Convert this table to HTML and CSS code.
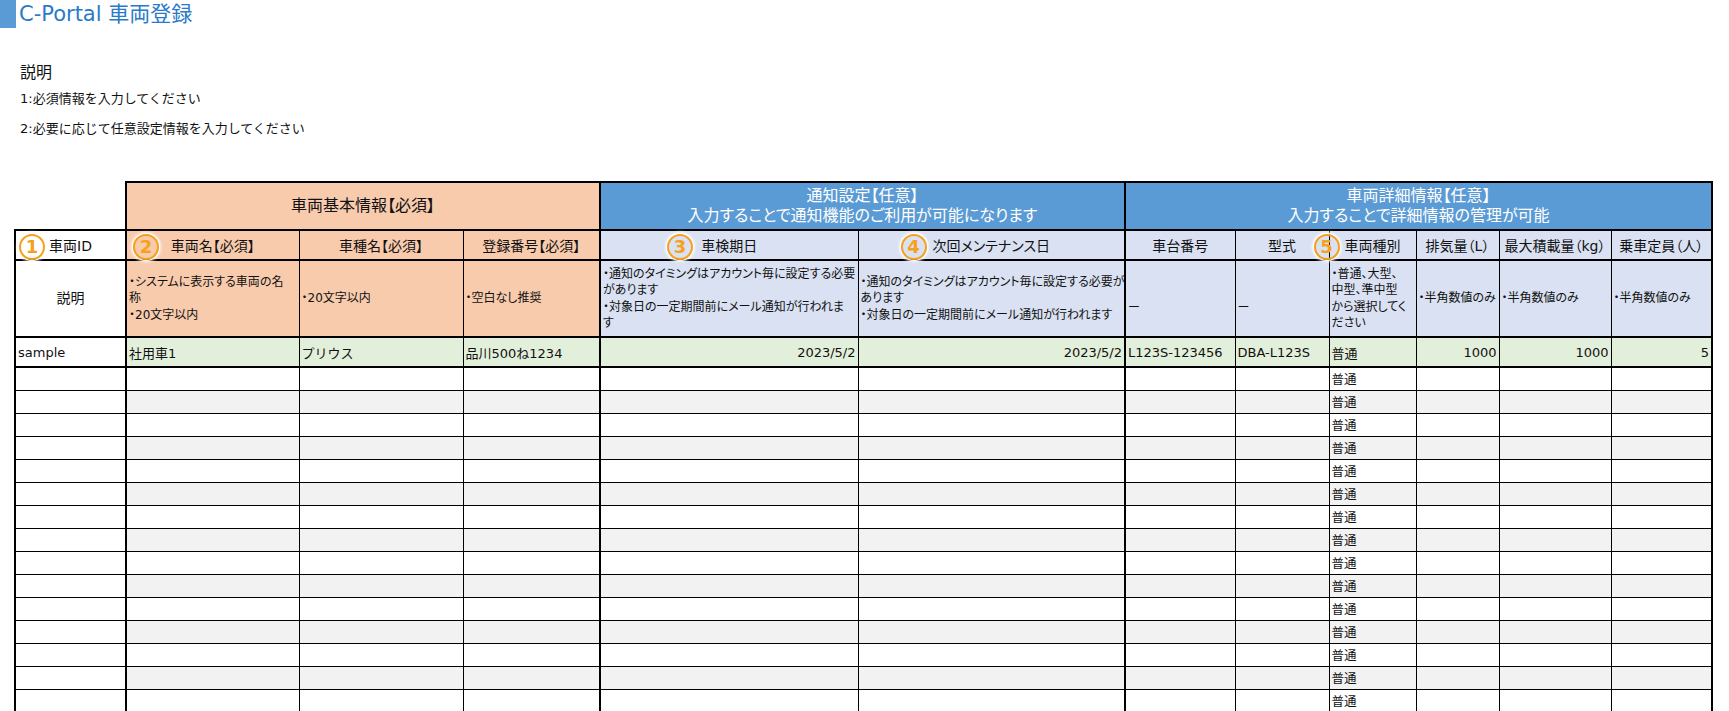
FILE: index.html
```html
<!DOCTYPE html>
<html lang="ja">
<head>
<meta charset="utf-8">
<title>C-Portal 車両登録</title>
<link rel="stylesheet" href="styles.css">
</head>
<body>
<header class="title">
  <span class="title-mark"></span>
  <h1 class="title-text">C-Portal 車両登録</h1>
</header>
<section class="intro">
  <p class="intro-head">説明</p>
  <p class="intro-line">1:必須情報を入力してください</p>
  <p class="intro-line">2:必要に応じて任意設定情報を入力してください</p>
</section>
<table class="sheet">
  <colgroup>
    <col><col><col><col><col><col><col><col><col><col><col><col>
  </colgroup>
  <tbody>
    <tr class="grp">
      <td class="blank"></td>
      <td colspan="3" class="g-req">車両基本情報【必須】</td>
      <td colspan="2" class="g-opt">通知設定【任意】<br>入力することで通知機能のご利用が可能になります</td>
      <td colspan="6" class="g-opt">車両詳細情報【任意】<br>入力することで詳細情報の管理が可能</td>
    </tr>
    <tr class="hdr">
      <td class="c1"><span class="num n1">1</span>車両ID</td>
      <td class="or"><span class="num n2">2</span>車両名【必須】</td>
      <td class="or">車種名【必須】</td>
      <td class="or ge">登録番号【必須】</td>
      <td class="lb"><span class="num n3">3</span>車検期日</td>
      <td class="lb ge"><span class="num n4">4</span>次回メンテナンス日</td>
      <td class="lb">車台番号</td>
      <td class="lb">型式</td>
      <td class="lb"><span class="num n5">5</span>車両種別</td>
      <td class="lb">排気量（L）</td>
      <td class="lb">最大積載量（kg）</td>
      <td class="lb ge">乗車定員（人）</td>
    </tr>
    <tr class="desc">
      <td class="c1 center">説明</td>
      <td class="or">・システムに表示する車両の名<br>称<br>・20文字以内</td>
      <td class="or">・20文字以内</td>
      <td class="or ge">・空白なし推奨</td>
      <td class="lb">・通知のタイミングはアカウント毎に設定する必要<br>があります<br>・対象日の一定期間前にメール通知が行われま<br>す</td>
      <td class="lb ge">・通知のタイミングはアカウント毎に設定する必要が<br>あります<br>・対象日の一定期間前にメール通知が行われます</td>
      <td class="lb dash">ー</td>
      <td class="lb dash">ー</td>
      <td class="lb">・普通、大型、<br>中型、準中型<br>から選択してく<br>ださい</td>
      <td class="lb">・半角数値のみ</td>
      <td class="lb">・半角数値のみ</td>
      <td class="lb ge">・半角数値のみ</td>
    </tr>
    <tr class="smp">
      <td class="c1">sample</td>
      <td>社用車1</td>
      <td>プリウス</td>
      <td class="ge">品川500ね1234</td>
      <td class="r">2023/5/2</td>
      <td class="r ge">2023/5/2</td>
      <td>L123S-123456</td>
      <td>DBA-L123S</td>
      <td>普通</td>
      <td class="r">1000</td>
      <td class="r">1000</td>
      <td class="r ge">5</td>
    </tr>
    <tr class="data"><td class="c1"></td><td></td><td></td><td class="ge"></td><td></td><td class="ge"></td><td></td><td></td><td class="kind">普通</td><td></td><td></td><td class="ge"></td></tr>
    <tr class="data"><td class="c1"></td><td></td><td></td><td class="ge"></td><td></td><td class="ge"></td><td></td><td></td><td class="kind">普通</td><td></td><td></td><td class="ge"></td></tr>
    <tr class="data"><td class="c1"></td><td></td><td></td><td class="ge"></td><td></td><td class="ge"></td><td></td><td></td><td class="kind">普通</td><td></td><td></td><td class="ge"></td></tr>
    <tr class="data"><td class="c1"></td><td></td><td></td><td class="ge"></td><td></td><td class="ge"></td><td></td><td></td><td class="kind">普通</td><td></td><td></td><td class="ge"></td></tr>
    <tr class="data"><td class="c1"></td><td></td><td></td><td class="ge"></td><td></td><td class="ge"></td><td></td><td></td><td class="kind">普通</td><td></td><td></td><td class="ge"></td></tr>
    <tr class="data"><td class="c1"></td><td></td><td></td><td class="ge"></td><td></td><td class="ge"></td><td></td><td></td><td class="kind">普通</td><td></td><td></td><td class="ge"></td></tr>
    <tr class="data"><td class="c1"></td><td></td><td></td><td class="ge"></td><td></td><td class="ge"></td><td></td><td></td><td class="kind">普通</td><td></td><td></td><td class="ge"></td></tr>
    <tr class="data"><td class="c1"></td><td></td><td></td><td class="ge"></td><td></td><td class="ge"></td><td></td><td></td><td class="kind">普通</td><td></td><td></td><td class="ge"></td></tr>
    <tr class="data"><td class="c1"></td><td></td><td></td><td class="ge"></td><td></td><td class="ge"></td><td></td><td></td><td class="kind">普通</td><td></td><td></td><td class="ge"></td></tr>
    <tr class="data"><td class="c1"></td><td></td><td></td><td class="ge"></td><td></td><td class="ge"></td><td></td><td></td><td class="kind">普通</td><td></td><td></td><td class="ge"></td></tr>
    <tr class="data"><td class="c1"></td><td></td><td></td><td class="ge"></td><td></td><td class="ge"></td><td></td><td></td><td class="kind">普通</td><td></td><td></td><td class="ge"></td></tr>
    <tr class="data"><td class="c1"></td><td></td><td></td><td class="ge"></td><td></td><td class="ge"></td><td></td><td></td><td class="kind">普通</td><td></td><td></td><td class="ge"></td></tr>
    <tr class="data"><td class="c1"></td><td></td><td></td><td class="ge"></td><td></td><td class="ge"></td><td></td><td></td><td class="kind">普通</td><td></td><td></td><td class="ge"></td></tr>
    <tr class="data"><td class="c1"></td><td></td><td></td><td class="ge"></td><td></td><td class="ge"></td><td></td><td></td><td class="kind">普通</td><td></td><td></td><td class="ge"></td></tr>
    <tr class="data"><td class="c1"></td><td></td><td></td><td class="ge"></td><td></td><td class="ge"></td><td></td><td></td><td class="kind">普通</td><td></td><td></td><td class="ge"></td></tr>
  </tbody>
</table>
</body>
</html>
```

FILE: styles.css
```css
html, body {
  margin: 0;
  padding: 0;
  background: #fff;
}

body {
  font-family: "DejaVu Sans", "Noto Sans CJK JP", sans-serif;
  color: #111;
  overflow: hidden;
}

.title {
  display: flex;
  align-items: center;
  height: 28px;
}

.title-mark {
  width: 16px;
  height: 28px;
  background: #5b9bd5;
}

.title-text {
  margin: 0 0 0 3px;
  font-size: 21px;
  font-weight: 400;
  line-height: 28px;
  color: #2a7ac8;
}

.intro {
  padding: 32px 0 0 20px;
}

.intro-head {
  margin: 0;
  font-size: 16px;
  line-height: 26px;
}

.intro-line {
  margin: 0;
  font-size: 13px;
  line-height: 26px;
}

.intro-line + .intro-line {
  margin-top: 4px;
}

.sheet {
  border-collapse: collapse;
  table-layout: fixed;
  width: 1697px;
  margin: 39px 0 0 14px;
  font-size: 13px;
}

.sheet col:nth-child(1) { width: 111px; }
.sheet col:nth-child(2) { width: 173px; }
.sheet col:nth-child(3) { width: 164px; }
.sheet col:nth-child(4) { width: 137px; }
.sheet col:nth-child(5) { width: 258px; }
.sheet col:nth-child(6) { width: 267px; }
.sheet col:nth-child(7) { width: 110px; }
.sheet col:nth-child(8) { width: 94px; }
.sheet col:nth-child(9) { width: 87px; }
.sheet col:nth-child(10) { width: 83px; }
.sheet col:nth-child(11) { width: 112px; }
.sheet col:nth-child(12) { width: 101px; }

.sheet td {
  border: 1px solid #000;
  padding: 0 2px;
  white-space: nowrap;
  vertical-align: middle;
  color: #111;
}

/* group header row */
.grp { height: 48px; }
.grp td {
  border: 2px solid #000;
  text-align: center;
  font-size: 16px;
  line-height: 20px;
  font-feature-settings: "palt" 1;
}
.grp td.blank {
  border: none;
  background: #fff;
}
.g-req { background: #f8cbad; }
.g-opt { background: #5b9bd5; }
.grp td.g-opt { color: #fff; }

/* column header row */
.hdr { height: 30px; }
.hdr td {
  position: relative;
  text-align: center;
  font-size: 14px;
  font-feature-settings: "palt" 1;
  border-top: 2px solid #000;
  border-bottom: 2px solid #000;
}

/* description row */
.desc { height: 77px; }
.desc td {
  font-size: 12px;
  line-height: 16.5px;
  font-feature-settings: "palt" 1;
  border-top: 2px solid #000;
  border-bottom: 2px solid #000;
}
.desc td.center {
  text-align: center;
  font-size: 14px;
  font-feature-settings: normal;
}
.desc td.dash {
  padding-top: 20px;
  font-feature-settings: normal;
}

/* sample row */
.smp { height: 30px; }
.smp td {
  background: #e2efda;
  border-top: 2px solid #000;
  border-bottom: 2px solid #000;
}

/* data rows */
.data { height: 23px; }
.data td { background: #fff; }
.data:nth-child(even) td { background: #f2f2f2; }
.kind { font-size: 12.5px; }

/* column roles */
.sheet td.c1 {
  border-left: 2px solid #000;
  border-right: 2px solid #000;
}
.sheet td.ge { border-right: 2px solid #000; }
.sheet .or { background: #f8cbad; }
.sheet .lb { background: #d9e1f2; }
.sheet td.c1:not(.or):not(.lb) { background: #fff; }
.smp td.c1 { background: #e2efda; }
.data:nth-child(even) td.c1 { background: #f2f2f2; }
.r { text-align: right; }

/* circled annotation numbers */
.num {
  position: absolute;
  top: 3px;
  z-index: 2;
  width: 22px;
  height: 22px;
  border: 2px solid #f6a11c;
  border-radius: 50%;
  color: #f6a11c;
  font: 700 18px/22px "DejaVu Sans", sans-serif;
  text-align: center;
  box-shadow: 0 0 0 1px rgba(255, 255, 255, 0.95), 0 0 3px 2px rgba(255, 255, 255, 0.8);
}
.n1 { left: 3px; }
.n2 { left: 6px; }
.n3 { left: 66px; }
.n4 { left: 42px; }
.n5 { left: -16px; }
```
